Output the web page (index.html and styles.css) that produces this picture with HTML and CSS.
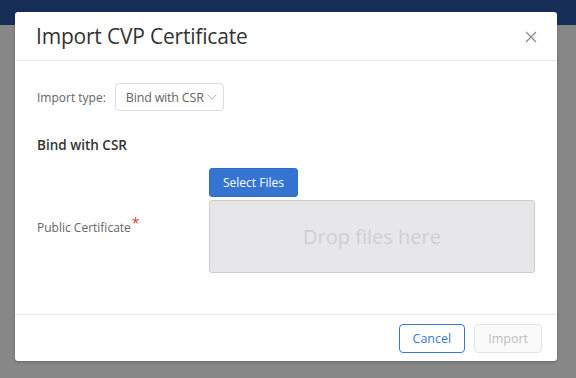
FILE: index.html
```html
<!DOCTYPE html>
<html>
<head>
    <title>Import CVP Certificate</title>
    <link rel="stylesheet" href="styles.css">
</head>
<body>
    <div class="topbar"></div>
    <div class="backdrop"></div>

    <div class="modal">
        <div class="modal-header">
            <h1>Import CVP Certificate</h1>
            <span class="close">
                <svg width="12" height="12" viewBox="0 0 12 12"><path d="M1 1L11 11M11 1L1 11" stroke="#8a8a8a" stroke-width="1.3" fill="none"/></svg>
            </span>
        </div>

        <div class="modal-body">
            <div class="row">
                <label class="label">Import type:</label>
                <div class="select">
                    Bind with CSR
                    <svg width="10" height="6" viewBox="0 0 10 6"><path d="M0.5 0.5L5 5L9.5 0.5" stroke="#b5b5b5" stroke-width="1" fill="none"/></svg>
                </div>
            </div>

            <h2>Bind with CSR</h2>

            <div class="file-row">
                <label class="label cert-label">Public Certificate<span class="req">*</span></label>
                <div class="uploader">
                    <button class="btn-primary">Select Files</button>
                    <div class="dropzone">Drop files here</div>
                </div>
            </div>
        </div>

        <div class="modal-footer">
            <button class="btn-outline">Cancel</button>
            <button class="btn-disabled">Import</button>
        </div>
    </div>
</body>
</html>
```

FILE: styles.css
```css
body {
    margin: 0;
    width: 576px;
    height: 378px;
    overflow: hidden;
    font-family: "Open Sans", "Noto Sans", sans-serif;
    background: #878787;
    position: relative;
}

.topbar {
    height: 25px;
    background: #172e57;
}

.backdrop {
    height: 353px;
    background: #878787;
}

.modal {
    position: absolute;
    left: 15px;
    top: 12px;
    width: 542px;
    height: 349px;
    background: #ffffff;
    border-radius: 3px;
    display: flex;
    flex-direction: column;
    box-shadow: 0 1px 3px rgba(0, 0, 0, 0.25);
}

.modal-header {
    height: 48px;
    border-bottom: 1px solid #e9e9e9;
    display: flex;
    align-items: center;
    justify-content: space-between;
    padding: 0 20px 0 21px;
}

.modal-header h1 {
    margin: 0;
    font-size: 21px;
    font-weight: 400;
    color: #333333;
    letter-spacing: -0.2px;
}

.close {
    display: flex;
    margin-top: 2px;
}

.modal-body {
    flex: 1;
    padding: 22px 22px 0 22px;
}

.row {
    display: flex;
    align-items: center;
    gap: 9px;
}

.label {
    font-size: 12px;
    color: #666666;
}

.select {
    height: 26px;
    border: 1px solid #dcdcdc;
    border-radius: 4px;
    padding: 0 6px 0 10px;
    display: flex;
    align-items: center;
    gap: 3px;
    font-size: 12.5px;
    letter-spacing: -0.2px;
    color: #666666;
}

h2 {
    margin: 25px 0 0 0;
    font-size: 13.5px;
    font-weight: 600;
    color: #333333;
}

.file-row {
    display: flex;
    align-items: flex-start;
    margin-top: 14px;
}

.cert-label {
    width: 172px;
    margin-top: 49px;
}

.req {
    color: #e43a2f;
    font-size: 14px;
    position: relative;
    top: -4px;
    margin-left: 1px;
}

.uploader {
    display: flex;
    flex-direction: column;
    align-items: flex-start;
    gap: 3px;
}

.btn-primary {
    height: 29px;
    padding: 0 13px;
    border: 1px solid #2f6fcb;
    border-radius: 3px;
    background: #3574d1;
    color: #ffffff;
    font-family: inherit;
    font-size: 12px;
}

.dropzone {
    width: 324px;
    height: 71px;
    border: 1px solid #cccccc;
    border-radius: 3px;
    background: #e7e7e9;
    color: #cfcfd2;
    font-size: 20px;
    display: flex;
    align-items: center;
    justify-content: center;
}

.modal-footer {
    height: 46px;
    border-top: 1px solid #e9e9e9;
    display: flex;
    align-items: center;
    justify-content: flex-end;
    gap: 9px;
    padding: 0 15px;
}

.modal-footer button {
    height: 29px;
    border-radius: 4px;
    font-family: inherit;
    font-size: 12.5px;
    padding: 0 13px;
}

.btn-outline {
    background: #ffffff;
    border: 1px solid #3a78d4;
    color: #3a78d4;
}

.btn-disabled {
    background: #fafafa;
    border: 1px solid #e3e3e3;
    color: #bdbdbd;
}
```
